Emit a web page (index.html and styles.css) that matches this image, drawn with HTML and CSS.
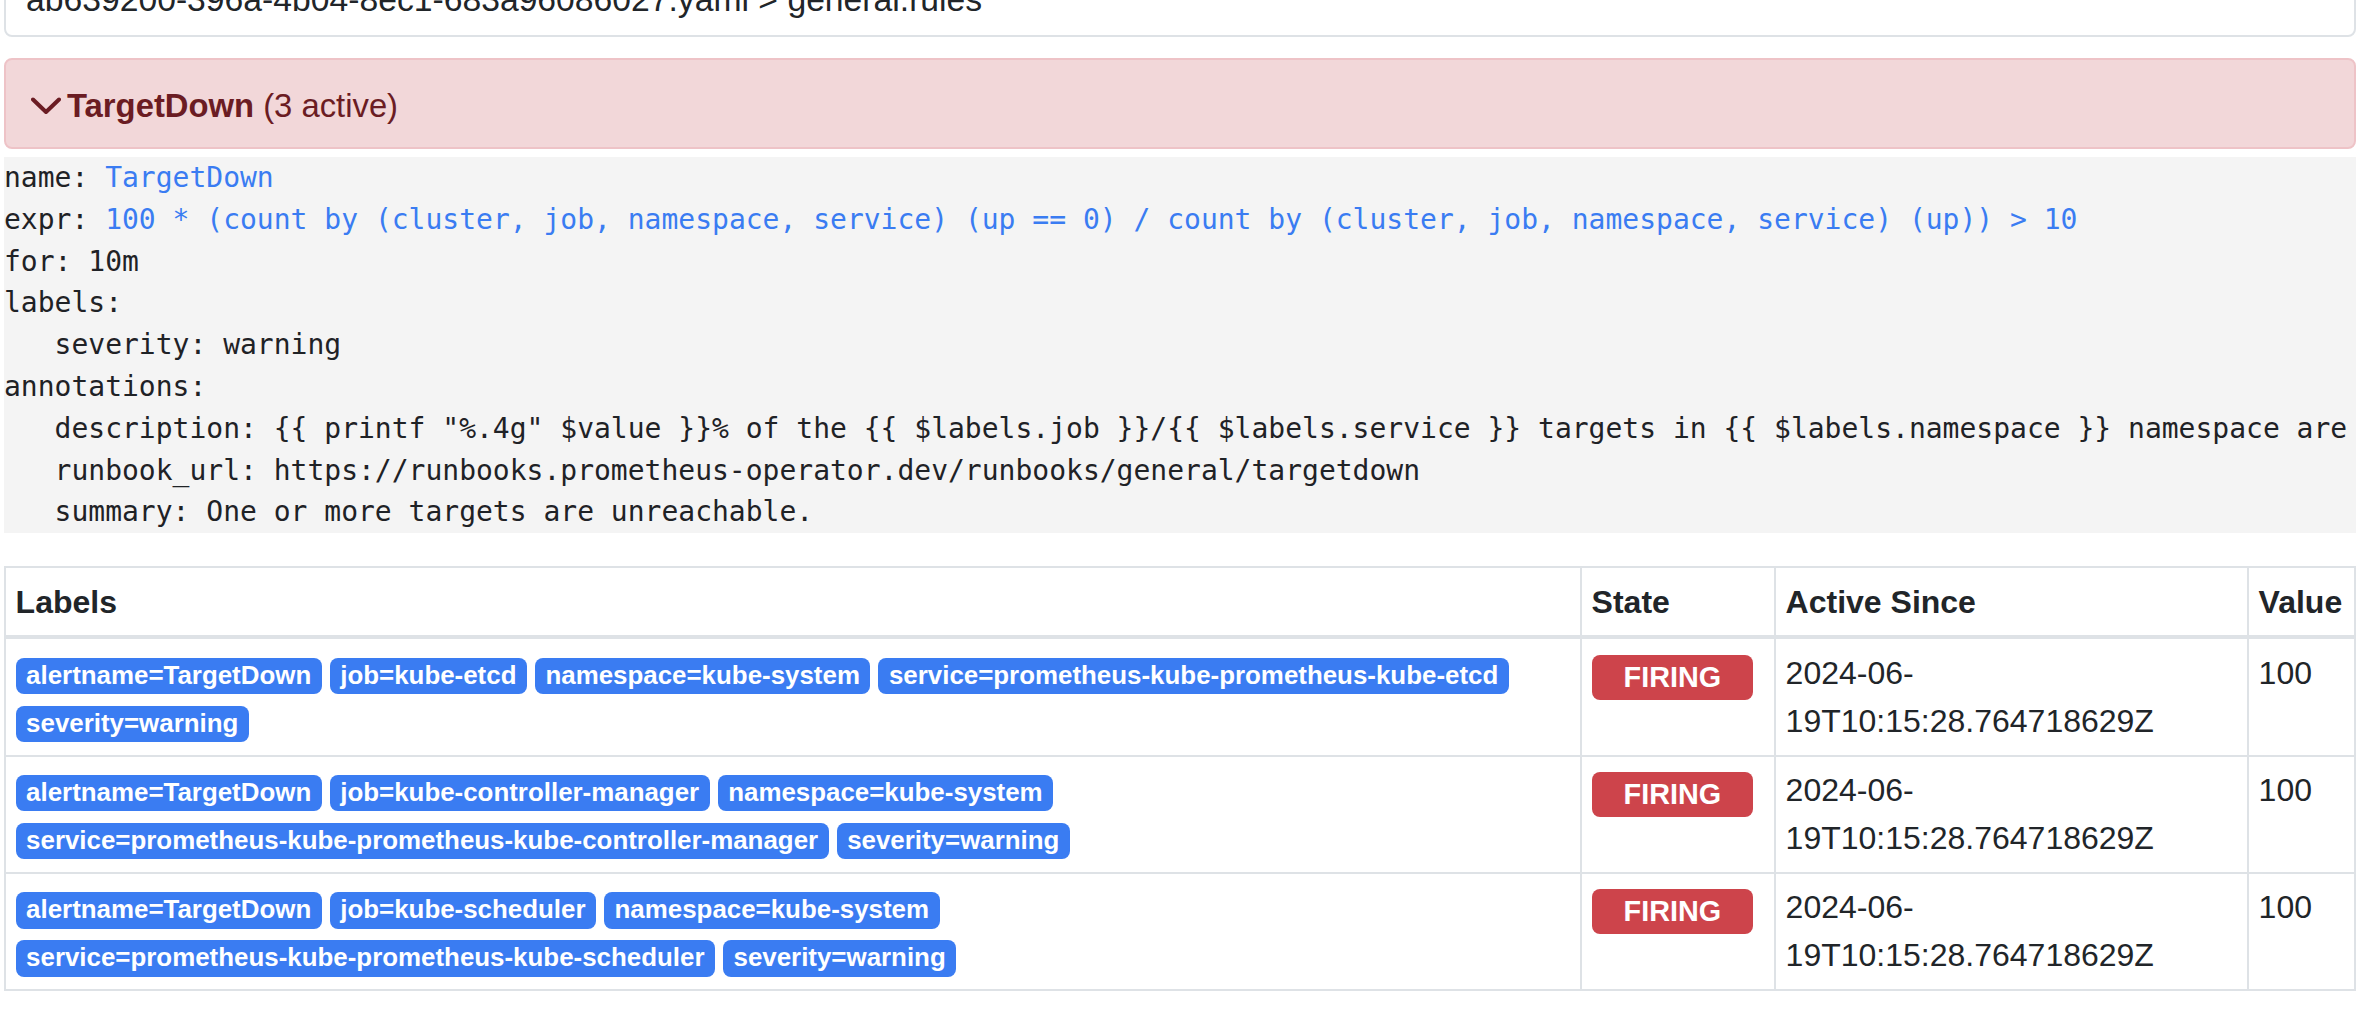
FILE: index.html
```html
<!DOCTYPE html>
<html lang="en">
<head>
<meta charset="utf-8">
<title>TargetDown</title>
<link rel="stylesheet" href="styles.css">
</head>
<body>
<div class="page">
  <div class="file-card">ab639200-396a-4b04-8ec1-683a96086027.yaml &gt; general.rules</div>
  <div class="alert"><svg class="chev" viewBox="0 0 30 18" aria-hidden="true"><polyline points="2,2.5 15,15 28,2.5" fill="none" stroke="currentColor" stroke-width="4" stroke-linecap="round" stroke-linejoin="round"/></svg><strong>TargetDown</strong> (3 active)</div>
  <pre class="rule">name: <span class="blue">TargetDown</span>
expr: <span class="blue">100 * (count by (cluster, job, namespace, service) (up == 0) / count by (cluster, job, namespace, service) (up)) &gt; 10</span>
for: 10m
labels:
   severity: warning
annotations:
   description: {{ printf "%.4g" $value }}% of the {{ $labels.job }}/{{ $labels.service }} targets in {{ $labels.namespace }} namespace are down.
   runbook_url: https://runbooks.prometheus-operator.dev/runbooks/general/targetdown
   summary: One or more targets are unreachable.</pre>
  <table class="alerts">
    <colgroup>
      <col>
      <col class="c-state">
      <col class="c-since">
      <col class="c-value">
    </colgroup>
    <thead>
      <tr><th>Labels</th><th>State</th><th>Active Since</th><th>Value</th></tr>
    </thead>
    <tbody>
      <tr>
        <td><span class="lbl">alertname=TargetDown</span><span class="lbl">job=kube-etcd</span><span class="lbl">namespace=kube-system</span><span class="lbl">service=prometheus-kube-prometheus-kube-etcd</span><span class="lbl">severity=warning</span></td>
        <td><span class="firing">FIRING</span></td>
        <td>2024-06-<wbr>19T10:15:28.764718629Z</td>
        <td>100</td>
      </tr>
      <tr>
        <td><span class="lbl">alertname=TargetDown</span><span class="lbl">job=kube-controller-manager</span><span class="lbl">namespace=kube-system</span><span class="lbl">service=prometheus-kube-prometheus-kube-controller-manager</span><span class="lbl">severity=warning</span></td>
        <td><span class="firing">FIRING</span></td>
        <td>2024-06-<wbr>19T10:15:28.764718629Z</td>
        <td>100</td>
      </tr>
      <tr>
        <td><span class="lbl">alertname=TargetDown</span><span class="lbl">job=kube-scheduler</span><span class="lbl">namespace=kube-system</span><span class="lbl">service=prometheus-kube-prometheus-kube-scheduler</span><span class="lbl">severity=warning</span></td>
        <td><span class="firing">FIRING</span></td>
        <td>2024-06-<wbr>19T10:15:28.764718629Z</td>
        <td>100</td>
      </tr>
    </tbody>
  </table>
</div>
</body>
</html>
```
FILE: styles.css
```css
html, body {
  margin: 0;
  padding: 0;
  background: #ffffff;
}

body {
  font-family: "Liberation Sans", Arial, Helvetica, sans-serif;
  font-size: 32px;
  line-height: 48px;
  color: #212529;
}

.page {
  width: 2352px;
  margin-left: 4px;
  padding-top: 1px;
}

/* card scrolled partially out of view */
.file-card {
  margin-top: -40px;
  border: 2px solid #dee2e6;
  border-radius: 8px;
  padding: 12px 20px;
  font-size: 33.7px;
  line-height: 48px;
  background: #fff;
}

.alert {
  margin-top: 21px;
  border: 2px solid #eec3c7;
  border-radius: 8px;
  background: #f2d7d9;
  color: #6b1c23;
  padding: 22px 25px 18px;
  font-size: 32.8px;
  line-height: 47px;
}

.alert strong {
  font-weight: bold;
}

.chev {
  width: 30px;
  height: 18px;
  vertical-align: 2px;
  margin-right: 6px;
}

.rule {
  margin: 8px 0 0;
  padding: 0;
  background: #f4f4f4;
  font-family: "DejaVu Sans Mono", "Liberation Mono", monospace;
  font-size: 28px;
  line-height: 41.8px;
  color: #1f2226;
  overflow: hidden;
  white-space: pre;
}

.blue {
  color: #3a7cf2;
}

.alerts {
  margin-top: 33px;
  width: 100%;
  border-collapse: collapse;
  table-layout: fixed;
}

.c-state { width: 194px; }
.c-since { width: 473px; }
.c-value { width: 107px; }

.alerts th,
.alerts td {
  border: 2px solid #dee2e6;
  padding: 9.6px;
  vertical-align: top;
  text-align: left;
}

.alerts thead th {
  border-bottom-width: 4px;
  font-weight: bold;
}

.lbl {
  display: inline-block;
  background: #3a7cf2;
  color: #ffffff;
  font-weight: bold;
  font-size: 25.9px;
  line-height: 1;
  padding: 5.3px 10.5px;
  border-radius: 8px;
  margin-right: 8px;
  white-space: nowrap;
}

.firing {
  display: inline-block;
  background: #cd444b;
  color: #ffffff;
  font-weight: bold;
  font-size: 28.8px;
  line-height: 1;
  padding: 8px 32px;
  border-radius: 8px;
  vertical-align: -3px;
}
```
